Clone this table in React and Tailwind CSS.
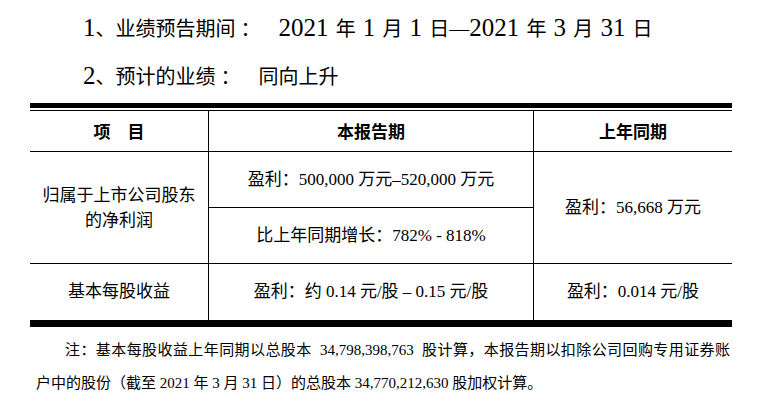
export default function App() {
  const N = ({ children }) => <span className="text-[25px]">{children}</span>;
  const Colon = () => <span className="pl-[5px] pr-[18px]">：</span>;
  return (
    <div className="w-[758px] h-[402px] bg-white overflow-hidden text-black font-['Liberation_Serif','Noto_Sans_CJK_SC',serif]">
      <div className="pt-[4px] pl-[83px] text-[20px] [word-spacing:0.9px]">
        <div className="h-[48px] leading-[48px] whitespace-nowrap">
          <N>1</N>、业绩预告期间<Colon /><N>2021 </N>年<N> 1 </N>月<N> 1 </N>日—<N>2021 </N>年<N> 3 </N>月<N> 31 </N>日
        </div>
        <div className="h-[48px] leading-[48px] whitespace-nowrap">
          <N>2</N>、预计的业绩<Colon />同向上升
        </div>
      </div>

      <div className="ml-[30px] w-[702px] mt-[3px]">
        <div className="h-[5px] bg-black" />
        <div className="h-[2px]" />
        <div className="grid grid-cols-[179px_325px_198px] grid-rows-[41px_56px_56px_56px] border-t border-black text-[17px]">
          <div className="border-r border-b border-black flex items-center justify-center font-['Noto_Sans_CJK_SC',sans-serif] font-bold">
            项　目
          </div>
          <div className="border-r border-b border-black flex items-center justify-center font-['Noto_Sans_CJK_SC',sans-serif] font-bold">
            本报告期
          </div>
          <div className="border-b border-black flex items-center justify-center font-['Noto_Sans_CJK_SC',sans-serif] font-bold">
            上年同期
          </div>

          <div className="row-span-2 border-r border-b border-black flex items-center justify-center text-center leading-[25px]">
            <div>
              归属于上市公司股东
              <br />
              的净利润
            </div>
          </div>
          <div className="border-r border-b border-black flex items-center justify-center whitespace-nowrap">
            盈利：500,000 万元–520,000 万元
          </div>
          <div className="row-span-2 border-b border-black flex items-center justify-center whitespace-nowrap">
            盈利：56,668 万元
          </div>
          <div className="border-r border-b border-black flex items-center justify-center whitespace-nowrap">
            比上年同期增长：782% - 818%
          </div>

          <div className="border-r border-black flex items-center justify-center whitespace-nowrap">
            基本每股收益
          </div>
          <div className="border-r border-black flex items-center justify-center whitespace-nowrap">
            盈利：约 0.14 元/股 – 0.15 元/股
          </div>
          <div className="flex items-center justify-center whitespace-nowrap">
            盈利：0.014 元/股
          </div>
        </div>
        <div className="h-[7px] bg-black" />
      </div>

      <div className="mt-[7px] text-[15px] leading-[33px] whitespace-nowrap">
        <div className="w-[730px] pl-[65px] text-justify [text-align-last:justify]">
          注：基本每股收益上年同期以总股本&nbsp; 34,798,398,763&nbsp; 股计算，本报告期以扣除公司回购专用证券账
        </div>
        <div className="pl-[36px]">
          户中的股份（截至 2021 年 3 月 31 日）的总股本 34,770,212,630 股加权计算。
        </div>
      </div>
    </div>
  );
}
